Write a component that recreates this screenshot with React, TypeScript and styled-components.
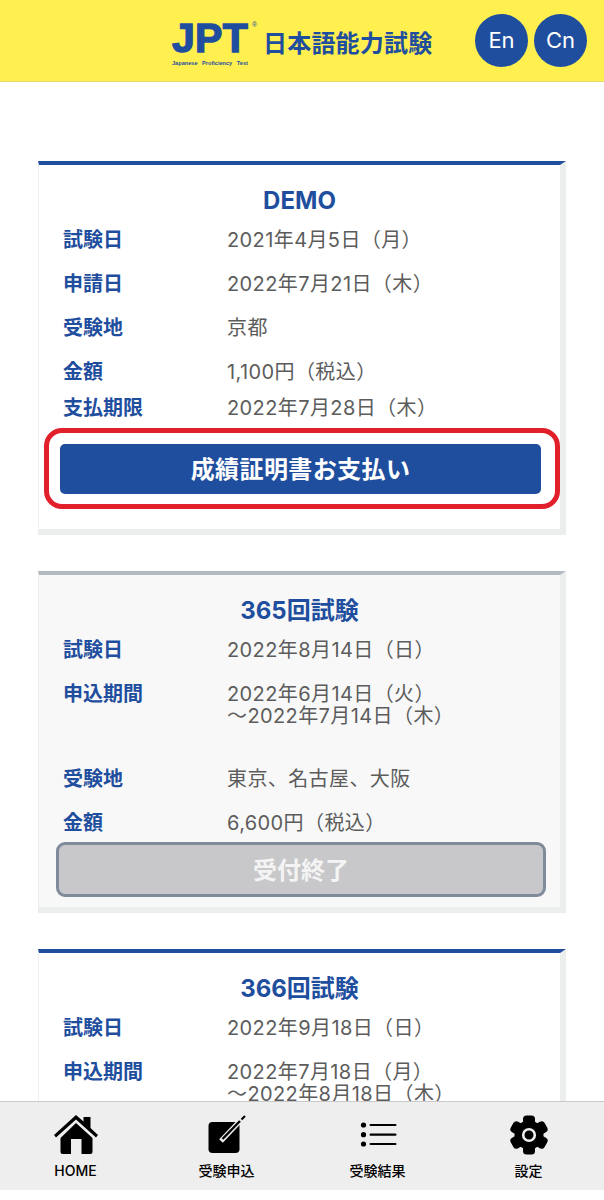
import React from 'react'
import styled, { createGlobalStyle } from 'styled-components'

const BLUE = '#1f4e9e'

const GlobalStyle = createGlobalStyle`
  html, body {
    margin: 0;
    padding: 0;
    background: #fff;
  }
  body {
    font-family: Inter, "Noto Sans CJK JP", sans-serif;
  }
  * {
    box-sizing: border-box;
  }
`

const Screen = styled.div`
  display: flex;
  flex-direction: column;
  height: 1200px;
  padding-bottom: 10px;
  overflow: hidden;
`

const Header = styled.header`
  flex: none;
  display: flex;
  align-items: center;
  height: 82px;
  padding: 0 17px 1px 172px;
  background: #fff04f;
  border-bottom: 1px solid #e6dc6a;
`

const Logo = styled.div`
  display: flex;
  align-items: flex-start;
  margin-top: 8px;
  color: ${BLUE};
`

const LogoMark = styled.div`
  position: relative;
  width: 91px;
  height: 44px;
`

const LogoLetters = styled.div`
  font-family: "Liberation Sans", sans-serif;
  font-size: 41px;
  font-weight: 700;
  line-height: 32px;
  letter-spacing: 0.3px;
  -webkit-text-stroke: 1.4px ${BLUE};
`

const LogoTag = styled.div`
  margin-top: 6px;
  font-family: "Liberation Sans", sans-serif;
  font-size: 5.6px;
  font-weight: 700;
  line-height: 7px;
  word-spacing: 3px;
  white-space: nowrap;
`

const Registered = styled.span`
  position: absolute;
  top: -1px;
  left: 80px;
  font-family: "Liberation Sans", sans-serif;
  font-size: 7px;
`

const LogoTitle = styled.div`
  margin-top: 6px;
  font-size: 24px;
  font-weight: 700;
  line-height: 32px;
  letter-spacing: 0.2px;
  white-space: nowrap;
`

const LangGroup = styled.div`
  display: flex;
  gap: 6px;
  margin-left: auto;
`

const LangButton = styled.button`
  width: 53px;
  height: 53px;
  padding: 0;
  border: none;
  border-radius: 50%;
  background: ${BLUE};
  color: #fff;
  font-family: inherit;
  font-size: 22px;
`

const Content = styled.main`
  flex: 1;
  min-height: 0;
  overflow: hidden;
  display: flex;
  flex-direction: column;
  gap: 36px;
  padding: 79px 38px 0;
`

const Card = styled.section<{ $closed?: boolean }>`
  flex: none;
  padding: 19px 0 ${({ $closed }) => ($closed ? 10 : 20)}px;
  background: ${({ $closed }) => ($closed ? '#f8f8f8' : '#fff')};
  border-top: 4px solid ${({ $closed }) => ($closed ? '#b4bac2' : BLUE)};
  border-left: 1px solid #eee;
  border-right: 6px solid #eceded;
  border-bottom: 6px solid #eceded;
`

const CardTitle = styled.h2`
  margin: 0 0 7px;
  height: 34px;
  font-size: 24px;
  font-weight: 700;
  line-height: 34px;
  text-align: center;
  color: ${BLUE};
`

const Row = styled.div<{ $height: number }>`
  display: flex;
  height: ${({ $height }) => $height}px;
  padding-left: 24px;
`

const Label = styled.div`
  flex: none;
  width: 164px;
  font-size: 20px;
  font-weight: 700;
  line-height: 30px;
  color: ${BLUE};
`

const Value = styled.div`
  font-size: 20px;
  line-height: 22px;
  letter-spacing: 0.4px;
  padding-top: 4px;
  color: #5c5c5c;
  white-space: nowrap;
`

const Highlight = styled.div`
  margin: 0 0 0 5px;
  padding: 11px 14px 10px 11px;
  border: 5px solid #e2202c;
  border-radius: 18px;
`

const PayButton = styled.button`
  display: block;
  width: 100%;
  height: 50px;
  padding: 0 0 3px;
  border: none;
  border-radius: 5px;
  background: ${BLUE};
  color: #fff;
  font-family: inherit;
  font-size: 24px;
  letter-spacing: 0.4px;
  font-weight: 700;
`

const ClosedButton = styled.button`
  display: block;
  width: 490px;
  height: 55px;
  margin: 0 0 0 17px;
  padding: 0 0 3px;
  border: 3px solid #7f8a9a;
  border-radius: 9px;
  background: #c8c8ca;
  color: #f4f4f4;
  font-family: inherit;
  font-size: 24px;
  font-weight: 700;
`

const Footer = styled.nav`
  flex: none;
  display: grid;
  grid-template-columns: repeat(4, 1fr);
  height: 89px;
  background: #eee;
  border-top: 1px solid #c9c9c9;
`

const Tab = styled.div`
  display: flex;
  flex-direction: column;
  align-items: center;
  color: #000;
`

const TabIcon = styled.div`
  display: flex;
  align-items: flex-start;
  justify-content: center;
  width: 46px;
  height: 46px;
  margin-top: 12px;
`

const TabLabel = styled.div`
  margin-top: 2px;
  font-size: 14px;
  font-weight: 500;
  line-height: 18px;
  white-space: nowrap;
`

function HomeIcon() {
  return (
    <svg width="44" height="42" viewBox="0 0 44 42" fill="#000" style={{ marginTop: 1 }}>
      <path d="M22 0 L29.5 6.6 V2 H36.5 V13 L44 20 L42 22.5 L22 4.4 L2 22.5 L0 20 Z" />
      <path d="M22 8 L38.5 23 V37 Q38.5 39 36.5 39 H27.5 V24 H17 V39 H8.5 Q6.5 39 6.5 37 V23 Z" />
    </svg>
  )
}

function ApplyIcon() {
  return (
    <svg width="46" height="46" viewBox="0 0 46 46">
      <rect x="4.5" y="8" width="31" height="31" rx="4" fill="#000" />
      <path d="M17 27 L35 8" fill="none" stroke="#eee" strokeWidth="5" />
      <path d="M18.5 25 L36 7" fill="none" stroke="#000" strokeWidth="2.4" />
      <path d="M37.5 5.5 L41 2" fill="none" stroke="#000" strokeWidth="2.2" />
    </svg>
  )
}

function ResultsIcon() {
  return (
    <svg width="38" height="30" viewBox="0 0 38 30" fill="#000" style={{ marginTop: 8 }}>
      <circle cx="4.5" cy="3" r="2.6" />
      <circle cx="4.5" cy="12.7" r="2.6" />
      <circle cx="4.5" cy="22" r="2.6" />
      <rect x="10.5" y="1.9" width="27" height="2.2" rx="1.1" />
      <rect x="10.5" y="11.6" width="27" height="2.2" rx="1.1" />
      <rect x="10.5" y="20.9" width="27" height="2.2" rx="1.1" />
    </svg>
  )
}

function GearIcon() {
  return (
    <svg width="40" height="40" viewBox="0 0 40 40" fill="#000" style={{ marginTop: 1 }}>
      <circle cx="20" cy="20" r="14.5" />
      <rect x="14" y="0.5" width="12" height="39" rx="3.5" />
      <rect x="14" y="0.5" width="12" height="39" rx="3.5" transform="rotate(60 20 20)" />
      <rect x="14" y="0.5" width="12" height="39" rx="3.5" transform="rotate(120 20 20)" />
      <circle cx="20" cy="20" r="5.8" stroke="#eee" strokeWidth="2.6" />
    </svg>
  )
}

const tabs = [
  { label: 'HOME', icon: <HomeIcon /> },
  { label: '受験申込', icon: <ApplyIcon /> },
  { label: '受験結果', icon: <ResultsIcon /> },
  { label: '設定', icon: <GearIcon /> },
]

export default function App() {
  return (
    <Screen>
      <GlobalStyle />
      <Header>
        <Logo>
          <LogoMark>
            <LogoLetters>JPT</LogoLetters>
            <Registered>®</Registered>
            <LogoTag>Japanese Proficiency Test</LogoTag>
          </LogoMark>
          <LogoTitle>日本語能力試験</LogoTitle>
        </Logo>
        <LangGroup>
          <LangButton>En</LangButton>
          <LangButton>Cn</LangButton>
        </LangGroup>
      </Header>
      <Content>
        <Card>
          <CardTitle>DEMO</CardTitle>
          <Row $height={44}>
            <Label>試験日</Label>
            <Value>2021年4月5日（月）</Value>
          </Row>
          <Row $height={44}>
            <Label>申請日</Label>
            <Value>2022年7月21日（木）</Value>
          </Row>
          <Row $height={44}>
            <Label>受験地</Label>
            <Value>京都</Value>
          </Row>
          <Row $height={36}>
            <Label>金額</Label>
            <Value>1,100円（税込）</Value>
          </Row>
          <Row $height={35}>
            <Label>支払期限</Label>
            <Value>2022年7月28日（木）</Value>
          </Row>
          <Highlight>
            <PayButton>成績証明書お支払い</PayButton>
          </Highlight>
        </Card>
        <Card $closed>
          <CardTitle>365回試験</CardTitle>
          <Row $height={44}>
            <Label>試験日</Label>
            <Value>2022年8月14日（日）</Value>
          </Row>
          <Row $height={85}>
            <Label>申込期間</Label>
            <Value>
              2022年6月14日（火）
              <br />
              〜2022年7月14日（木）
            </Value>
          </Row>
          <Row $height={44}>
            <Label>受験地</Label>
            <Value>東京、名古屋、大阪</Value>
          </Row>
          <Row $height={34}>
            <Label>金額</Label>
            <Value>6,600円（税込）</Value>
          </Row>
          <ClosedButton>受付終了</ClosedButton>
        </Card>
        <Card>
          <CardTitle>366回試験</CardTitle>
          <Row $height={44}>
            <Label>試験日</Label>
            <Value>2022年9月18日（日）</Value>
          </Row>
          <Row $height={85}>
            <Label>申込期間</Label>
            <Value>
              2022年7月18日（月）
              <br />
              〜2022年8月18日（木）
            </Value>
          </Row>
        </Card>
      </Content>
      <Footer>
        {tabs.map(tab => (
          <Tab key={tab.label}>
            <TabIcon>{tab.icon}</TabIcon>
            <TabLabel>{tab.label}</TabLabel>
          </Tab>
        ))}
      </Footer>
    </Screen>
  )
}
